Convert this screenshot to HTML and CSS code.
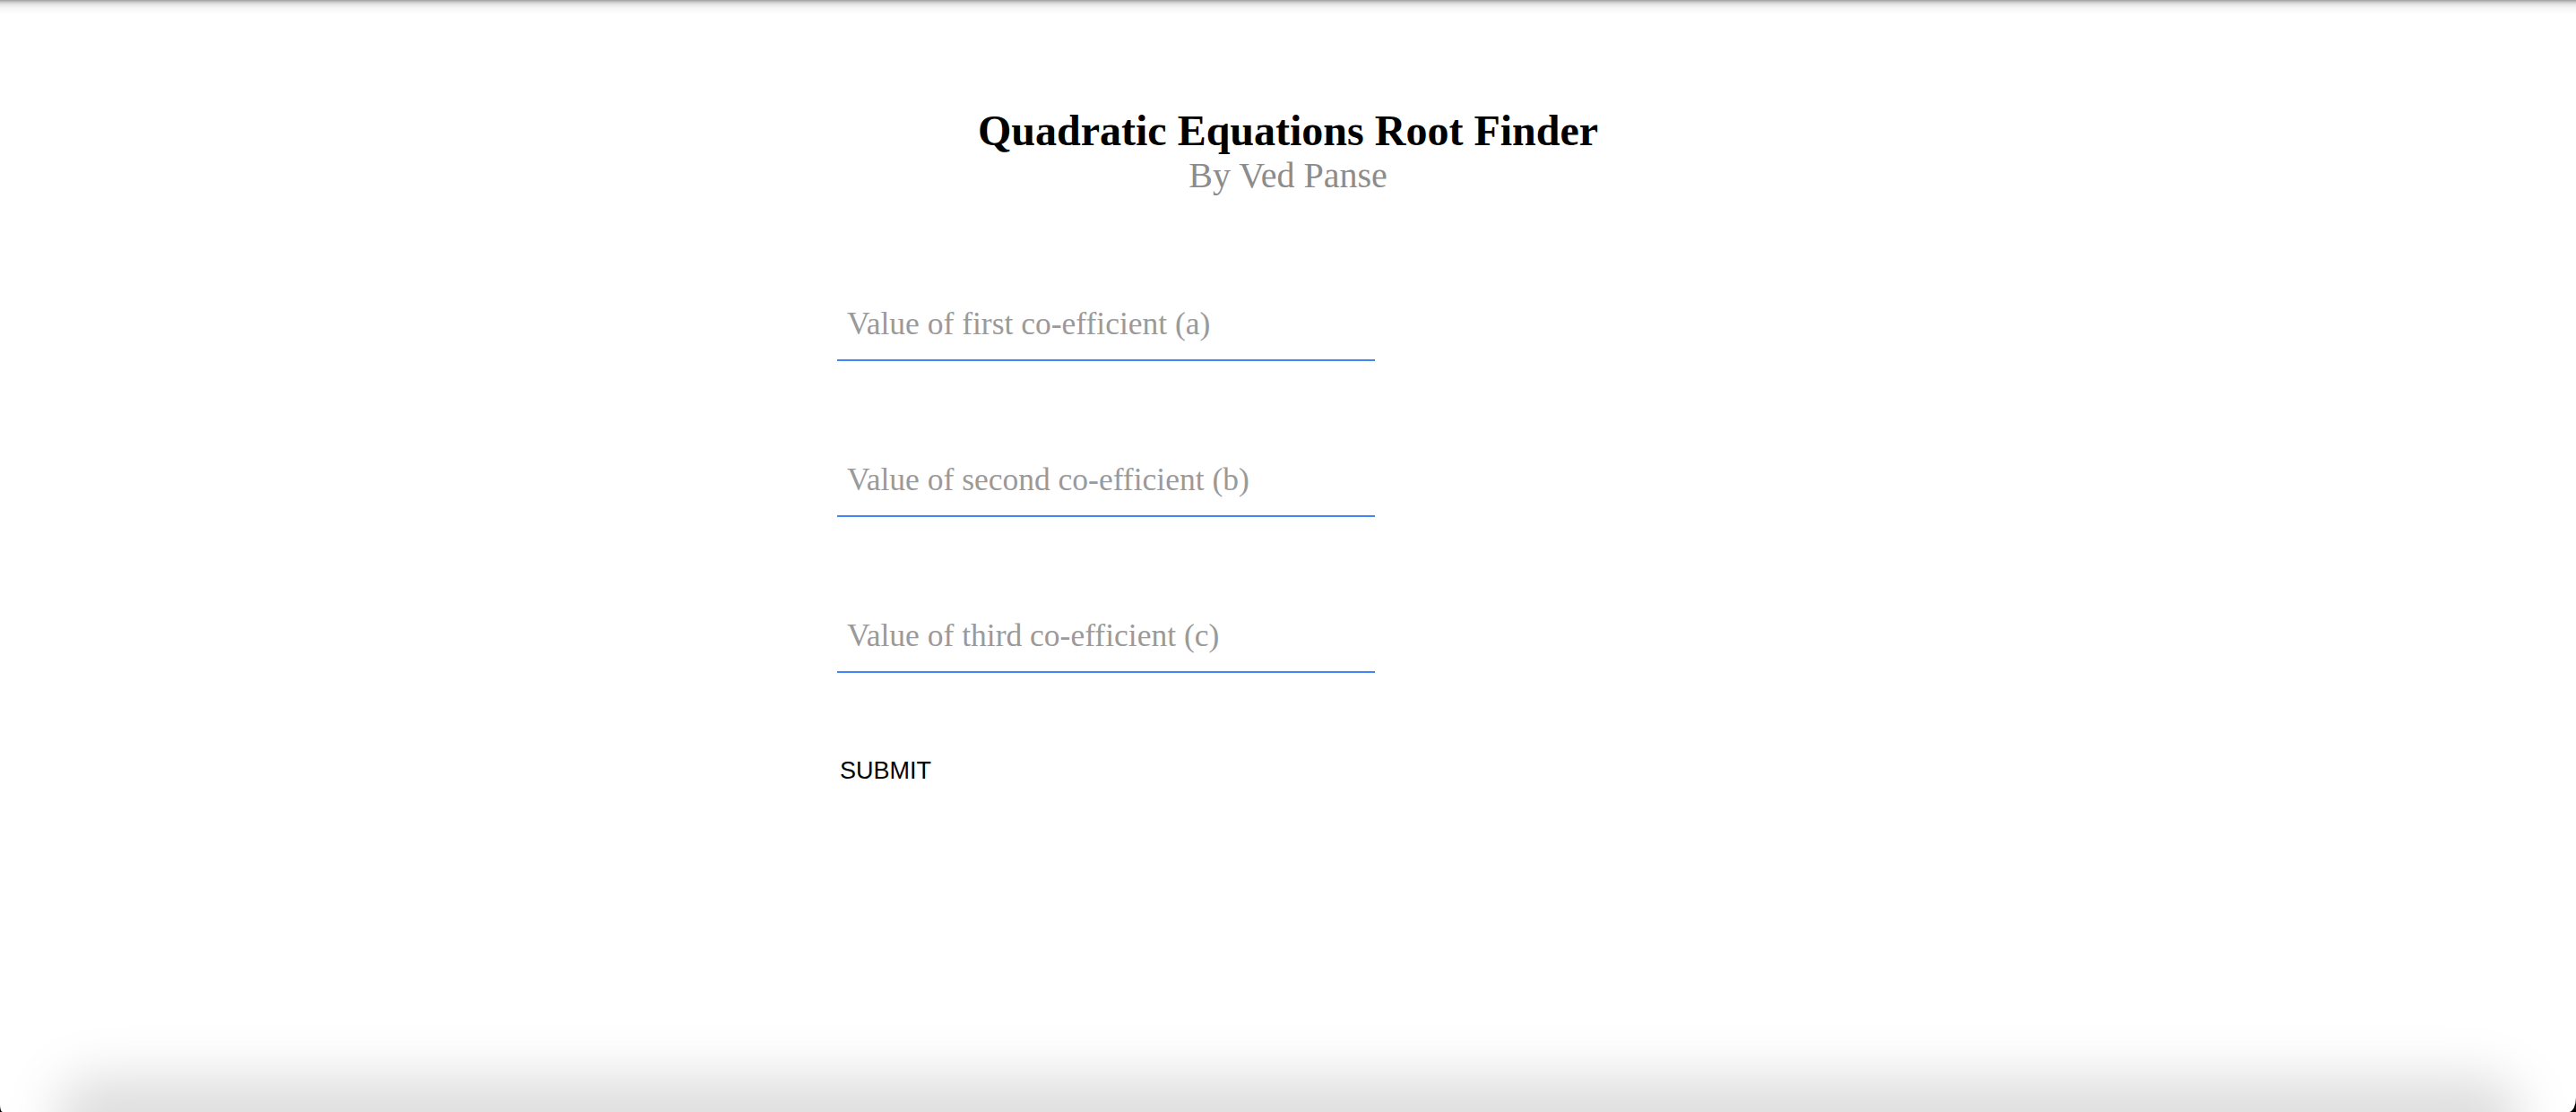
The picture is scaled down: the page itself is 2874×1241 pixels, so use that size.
FILE: index.html
```html
<!DOCTYPE html>
<html lang="en">
<head>
<meta charset="utf-8">
<title>Quadratic Equations Root Finder</title>
<link rel="stylesheet" href="styles.css">
</head>
<body>
<div class="window">
  <header class="heading">
    <h1 class="title">Quadratic Equations Root Finder</h1>
    <p class="byline">By Ved Panse</p>
  </header>
  <main class="container">
    <form class="form">
      <div class="field"><input class="field-input" type="text" placeholder="Value of first co-efficient (a)"></div>
      <div class="field"><input class="field-input" type="text" placeholder="Value of second co-efficient (b)"></div>
      <div class="field"><input class="field-input" type="text" placeholder="Value of third co-efficient (c)"></div>
      <button class="submit" type="button">SUBMIT</button>
    </form>
  </main>
  <div class="shade-top"></div>
  <div class="shade-bottom"></div>
</div>
</body>
</html>
```

FILE: styles.css
```css
html {
  height: 100%;
  background: #000;
}

body {
  margin: 0;
  height: 100%;
  overflow: hidden;
}

.window {
  position: relative;
  height: 100%;
  background: #fff;
  overflow: hidden;
  border-bottom-right-radius: 8px 16px;
  border-bottom-left-radius: 3px 8px;
}

.heading {
  padding-top: 118px;
  text-align: center;
}

.title {
  margin: 0;
  font-family: "Liberation Serif", "Times New Roman", serif;
  font-weight: 700;
  font-size: 48px;
  line-height: 55px;
  color: #000;
}

.byline {
  margin: 1px 0 0;
  font-family: "Liberation Serif", "Times New Roman", serif;
  font-size: 40px;
  line-height: 44px;
  color: #8c8c8c;
}

.container {
  width: 1006px;
  margin: 113px auto 0;
}

.form {
  display: flex;
  flex-direction: column;
  align-items: flex-start;
}

.field + .field {
  margin-top: 102px;
}

.field-input {
  box-sizing: border-box;
  display: block;
  width: 600px;
  height: 72px;
  padding: 10px 11px 20px;
  border: 0;
  border-bottom: 2px solid #4285f4;
  background: transparent;
  outline: none;
  font-family: "Liberation Serif", "Times New Roman", serif;
  font-size: 35.5px;
  color: #000;
}

.field-input::placeholder {
  color: #9a9a9a;
  opacity: 1;
}

.submit {
  margin-top: 94px;
  padding: 0 3px;
  border: 0;
  background: none;
  font-family: "Liberation Sans", Arial, sans-serif;
  font-size: 27px;
  line-height: 31px;
  color: #000;
  cursor: pointer;
}

.shade-top {
  position: absolute;
  top: 0;
  left: 0;
  right: 0;
  height: 16px;
  pointer-events: none;
  background: linear-gradient(to bottom, #9c9c9c 0px, #c6c6c6 2px, #e6e6e6 5px, #f6f6f6 9px, rgba(255,255,255,0) 16px);
}

.shade-bottom {
  position: absolute;
  left: 60px;
  right: 60px;
  bottom: -60px;
  height: 100px;
  border-radius: 50px;
  background: rgba(0, 0, 0, 0.13);
  filter: blur(28px);
  pointer-events: none;
}
```
